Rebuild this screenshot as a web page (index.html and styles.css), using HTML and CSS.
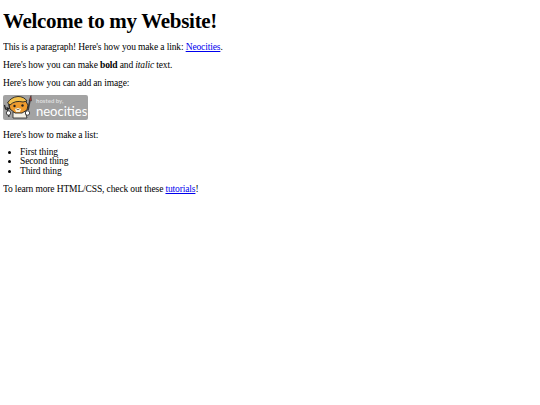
FILE: index.html
```html
<!DOCTYPE html>
<html lang="en">
<head>
    <meta charset="UTF-8">
    <title>Welcome to my Website!</title>
    <link rel="stylesheet" href="styles.css">
</head>
<body>
    <h1>Welcome to my Website!</h1>
    <p>This is a paragraph! Here's how you make a link: <a href="#">Neocities</a>.</p>
    <p>Here's how you can make <strong>bold</strong> and <em>italic</em> text.</p>
    <p>Here's how you can add an image:</p>
    <div class="badge">
        <svg class="badge-cat" width="32" height="25" viewBox="0 0 32 25">
            <!-- fork -->
            <path d="M4 12 L6 22 M1.500 10 L2.500 14 Q4.500 15 6.500 13 L6 9.500" fill="none" stroke="#222" stroke-width="1.200"/>
            <!-- brush -->
            <path d="M27 5 L25 15" stroke="#3a3a3a" stroke-width="1.600"/>
            <path d="M28 0.500 L26 5.500 L28.500 6 Z" fill="#b5382e" stroke="#222" stroke-width="0.500"/>
            <!-- body -->
            <path d="M10 17 L22 16 L24 23 L10 23 Z" fill="#f5f1e6" stroke="#222" stroke-width="0.800"/>
            <!-- head -->
            <path d="M6 9 L11 6 L22 5 L25 10 L24 15 L19 18 L12 18 L7 14 Z" fill="#ee9b2d" stroke="#222" stroke-width="0.900"/>
            <!-- hard hat -->
            <path d="M4.500 8 Q8 2 15 1.500 Q21 1.500 24 6 L20 7 Q12 5 7 10 Z" fill="#f4c24e" stroke="#222" stroke-width="0.900"/>
            <!-- face -->
            <path d="M12 14 Q15 12 18 14 L17 17 L13 17 Z" fill="#fbeed2"/>
            <circle cx="11.500" cy="11" r="1.200" fill="#222"/>
            <circle cx="19.500" cy="10.500" r="1.200" fill="#222"/>
            <path d="M13.500 14 Q15 15.500 16.500 14" fill="none" stroke="#222" stroke-width="0.600"/>
            <!-- paws -->
            <circle cx="5.500" cy="18" r="2.200" fill="#fff" stroke="#222" stroke-width="0.800"/>
            <circle cx="24.500" cy="18" r="2.200" fill="#fff" stroke="#222" stroke-width="0.800"/>
        </svg>
        <div class="badge-text">
            <span class="badge-small">hosted by,</span>
            <span class="badge-name">neocities</span>
        </div>
    </div>
    <p>Here's how to make a list:</p>
    <ul>
        <li>First thing</li>
        <li>Second thing</li>
        <li>Third thing</li>
    </ul>
    <p>To learn more HTML/CSS, check out these <a href="#">tutorials</a>!</p>
</body>
</html>
```

FILE: styles.css
```css
body {
    font-family: "Liberation Serif", serif;
    font-size: 9.5px;
    letter-spacing: -0.13px;
    line-height: 9.6px;
    margin: 3px;
    color: #000;
    background-color: #fff;
}

h1 {
    font-size: 21px;
    letter-spacing: -0.3px;
    line-height: 24px;
    margin: 6px 0 10.3px;
}

p {
    margin: 8.2px 0;
}

ul {
    margin: -0.8px 0 8.2px;
    padding-left: 17px;
}

.badge {
    display: flex;
    align-items: center;
    gap: 1px;
    width: 85px;
    height: 25px;
    background-color: #a3a3a3;
    border-radius: 2px;
    margin: -1.8px 0 10.800px;
}

.badge-text {
    display: flex;
    flex-direction: column;
    margin-top: 1px;
    color: #fff;
    font-family: Lato, sans-serif;
    letter-spacing: 0;
}

.badge-small {
    font-size: 6px;
    font-weight: bold;
    line-height: 7px;
    color: #dedede;
}

.badge-name {
    font-size: 13px;
    line-height: 15px;
}
```
